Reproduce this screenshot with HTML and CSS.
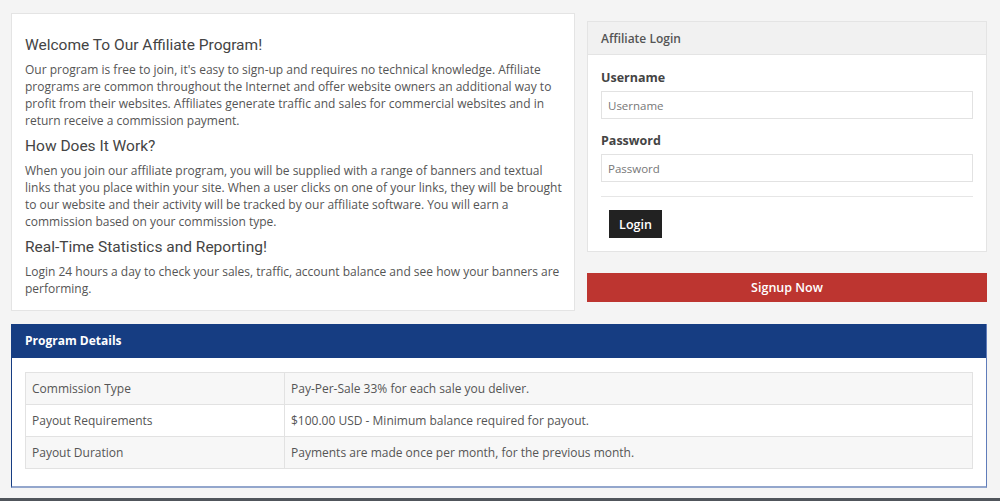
FILE: index.html
```html
<!DOCTYPE html>
<html>
<head>
<meta charset="utf-8">
<link rel="stylesheet" href="styles.css">
</head>
<body>
<div class="page">
  <div class="top-row">
    <div class="card intro">
      <h3>Welcome To Our Affiliate Program!</h3>
      <p>Our program is free to join, it's easy to sign-up and requires no technical knowledge. Affiliate programs are common throughout the Internet and offer website owners an additional way to profit from their websites. Affiliates generate traffic and sales for commercial websites and in return receive a commission payment.</p>
      <h3>How Does It Work?</h3>
      <p>When you join our affiliate program, you will be supplied with a range of banners and textual links that you place within your site. When a user clicks on one of your links, they will be brought to our website and their activity will be tracked by our affiliate software. You will earn a commission based on your commission type.</p>
      <h3>Real-Time Statistics and Reporting!</h3>
      <p>Login 24 hours a day to check your sales, traffic, account balance and see how your banners are performing.</p>
    </div>
    <div class="side">
      <div class="card login">
        <div class="login-head">Affiliate Login</div>
        <div class="login-body">
          <label class="lbl">Username</label>
          <input class="field" type="text" placeholder="Username">
          <label class="lbl">Password</label>
          <input class="field" type="password" placeholder="Password">
          <div class="sep"></div>
          <button class="btn-login">Login</button>
        </div>
      </div>
      <button class="btn-signup">Signup Now</button>
    </div>
  </div>
  <div class="details">
    <div class="details-head">Program Details</div>
    <div class="details-body">
      <table class="dtable">
        <tr><td class="c1">Commission Type</td><td>Pay-Per-Sale 33% for each sale you deliver.</td></tr>
        <tr><td class="c1">Payout Requirements</td><td>$100.00 USD - Minimum balance required for payout.</td></tr>
        <tr><td class="c1">Payout Duration</td><td>Payments are made once per month, for the previous month.</td></tr>
      </table>
    </div>
  </div>
</div>
<div class="footer-edge"></div>
</body>
</html>
```

FILE: styles.css
```css
* { box-sizing: border-box; }
html, body { margin: 0; padding: 0; }
body {
  background: #f4f4f4;
  font-family: "Open Sans", "Liberation Sans", sans-serif;
  color: #555;
  height: 501px;
  overflow: hidden;
}
.page {
  width: 976px;
  margin-left: 11px;
  padding-top: 13px;
}
.top-row {
  display: flex;
  gap: 12px;
  align-items: flex-start;
}
.card {
  background: #fff;
  border: 1px solid #e4e4e4;
}
.intro {
  width: 564px;
  padding: 21px 9px 13px 13px;
}
.intro h3 {
  font-family: Roboto, "Liberation Sans", sans-serif;
  font-weight: 400;
  font-size: 15.5px;
  line-height: 20px;
  color: #444;
  margin: 0 0 6px;
}
.intro p {
  font-size: 12px;
  line-height: 17px;
  margin: 0 0 7px;
  color: #555;
}
.intro p:last-child { margin-bottom: 0; }
.side {
  width: 400px;
  margin-top: 8px;
  display: flex;
  flex-direction: column;
  gap: 21px;
}
.login-head {
  background: #f1f1f1;
  border-bottom: 1px solid #e4e4e4;
  height: 33px;
  padding: 0 13px;
  font-size: 12px;
  font-weight: 600;
  line-height: 33px;
  color: #555;
}
.login-body {
  padding: 14px 13px 13px;
  display: flex;
  flex-direction: column;
  align-items: stretch;
}
.lbl {
  font-size: 12.5px;
  font-weight: 700;
  line-height: 17px;
  color: #444;
  margin-bottom: 5px;
}
.field {
  height: 28px;
  border: 1px solid #e2e2e2;
  padding: 0 6px;
  font-family: "Open Sans", "Liberation Sans", sans-serif;
  font-size: 11.5px;
  color: #555;
  margin-bottom: 13px;
  outline: none;
}
.field::placeholder { color: #777; }
.sep {
  border-top: 1px solid #e6e6e6;
  margin: 1px 0 13px;
}
.btn-login {
  align-self: flex-start;
  margin-left: 8px;
  height: 28px;
  width: 53px;
  background: #222;
  color: #fff;
  border: 0;
  font-family: "Open Sans", "Liberation Sans", sans-serif;
  font-size: 12.5px;
  font-weight: 600;
  padding: 0;
}
.btn-signup {
  display: block;
  width: 100%;
  height: 29px;
  background: #bd3530;
  color: #fff;
  border: 0;
  font-family: "Open Sans", "Liberation Sans", sans-serif;
  font-size: 12.5px;
  font-weight: 600;
  padding: 0;
}
.details {
  margin-top: 13px;
  background: #fff;
  border-left: 1px solid #163d82;
  border-right: 1px solid #5f7cba;
  border-bottom: 2px solid #93a6cc;
}
.details-head {
  background: #163d82;
  height: 34px;
  line-height: 34px;
  padding: 0 13px;
  color: #fff;
  font-size: 12px;
  font-weight: 700;
}
.details-body {
  padding: 14px 13px 17px;
}
.dtable {
  width: 100%;
  border-collapse: collapse;
  border: 1px solid #e2e2e2;
}
.dtable td {
  border: 1px solid #e2e2e2;
  height: 32px;
  padding: 0 6px;
  font-size: 12px;
  color: #555;
}
.dtable td.c1 { width: 259px; }
.dtable tr:nth-child(odd) td { background: #f7f7f7; }
.footer-edge {
  position: absolute;
  left: 0;
  right: 0;
  top: 498px;
  height: 3px;
  background: #50555b;
}
```
